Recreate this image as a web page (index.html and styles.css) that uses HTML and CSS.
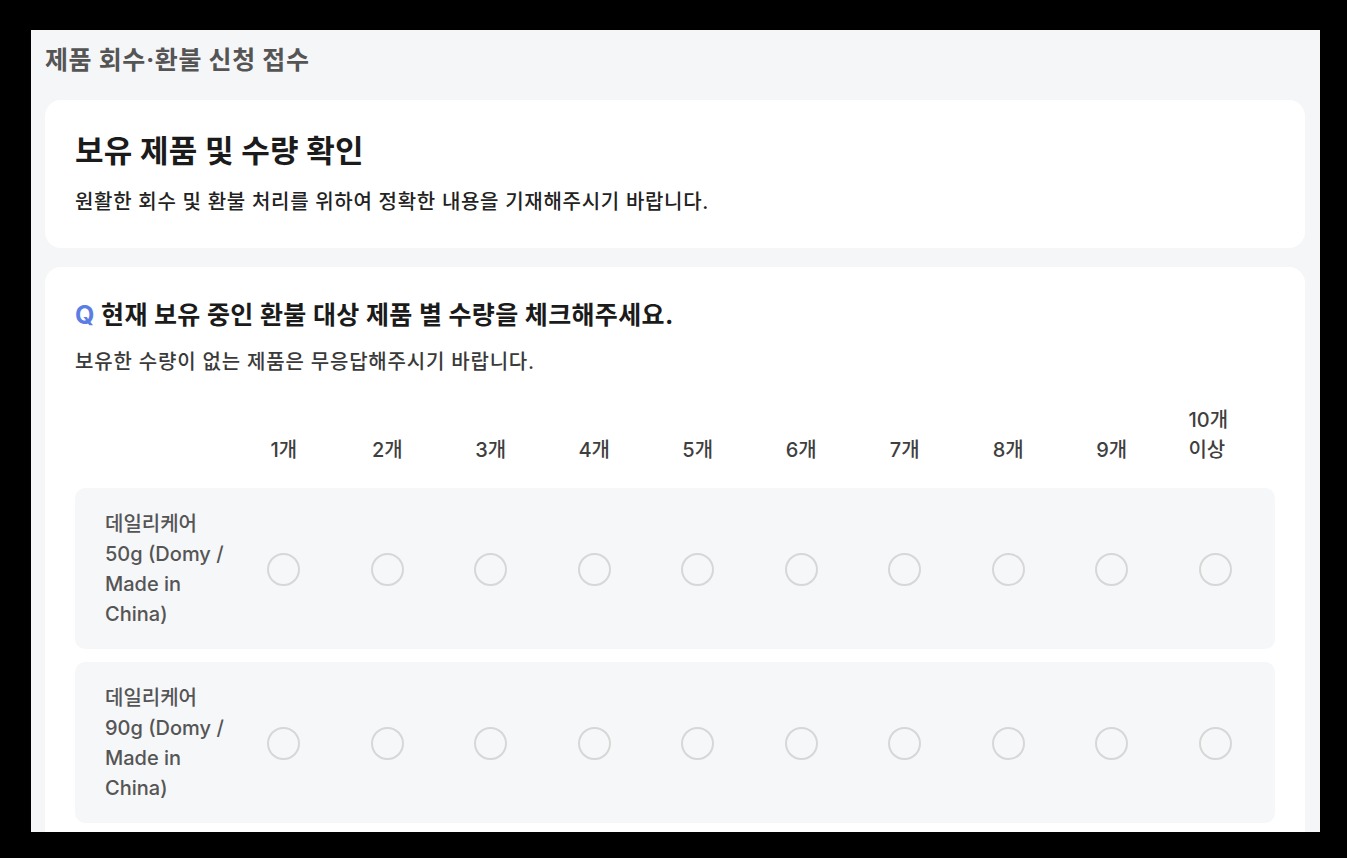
FILE: index.html
```html
<!DOCTYPE html>
<html lang="ko">
<head>
    <meta charset="UTF-8">
    <meta name="viewport" content="width=device-width, initial-scale=1.0">
    <title>제품 회수·환불 신청 접수</title>
    <link rel="stylesheet" href="styles.css">
</head>
<body>

<div class="panel">
    <h1 class="page-title">제품 회수·환불 신청 접수</h1>

    <!-- 안내 카드 -->
    <section class="card intro">
        <h2>보유 제품 및 수량 확인</h2>
        <p>원활한 회수 및 환불 처리를 위하여 정확한 내용을 기재해주시기 바랍니다.</p>
    </section>

    <!-- 질문 카드 -->
    <section class="card question">
        <h3><span class="q">Q</span> 현재 보유 중인 환불 대상 제품 별 수량을 체크해주세요.</h3>
        <p class="hint">보유한 수량이 없는 제품은 무응답해주시기 바랍니다.</p>

        <div class="matrix">
            <div class="matrix-head">
                <div class="label"></div>
                <div class="col">1개</div>
                <div class="col">2개</div>
                <div class="col">3개</div>
                <div class="col">4개</div>
                <div class="col">5개</div>
                <div class="col">6개</div>
                <div class="col">7개</div>
                <div class="col">8개</div>
                <div class="col">9개</div>
                <div class="col"><span class="two-line">10개<br>이상</span></div>
            </div>

            <div class="matrix-row">
                <div class="label">데일리케어 50g (Domy / Made in China)</div>
                <label class="col"><input type="radio" name="p50" value="1"></label>
                <label class="col"><input type="radio" name="p50" value="2"></label>
                <label class="col"><input type="radio" name="p50" value="3"></label>
                <label class="col"><input type="radio" name="p50" value="4"></label>
                <label class="col"><input type="radio" name="p50" value="5"></label>
                <label class="col"><input type="radio" name="p50" value="6"></label>
                <label class="col"><input type="radio" name="p50" value="7"></label>
                <label class="col"><input type="radio" name="p50" value="8"></label>
                <label class="col"><input type="radio" name="p50" value="9"></label>
                <label class="col"><input type="radio" name="p50" value="10"></label>
            </div>

            <div class="matrix-row">
                <div class="label">데일리케어 90g (Domy / Made in China)</div>
                <label class="col"><input type="radio" name="p90" value="1"></label>
                <label class="col"><input type="radio" name="p90" value="2"></label>
                <label class="col"><input type="radio" name="p90" value="3"></label>
                <label class="col"><input type="radio" name="p90" value="4"></label>
                <label class="col"><input type="radio" name="p90" value="5"></label>
                <label class="col"><input type="radio" name="p90" value="6"></label>
                <label class="col"><input type="radio" name="p90" value="7"></label>
                <label class="col"><input type="radio" name="p90" value="8"></label>
                <label class="col"><input type="radio" name="p90" value="9"></label>
                <label class="col"><input type="radio" name="p90" value="10"></label>
            </div>
        </div>
    </section>
</div>

</body>
</html>
```

FILE: styles.css
```css
body {
    margin: 0;
    background-color: #000;
    font-family: Inter, "Noto Sans CJK KR", sans-serif;
}

/* 회색 바탕 패널 */
.panel {
    margin: 30px 27px 0 31px;
    height: 802px;
    overflow: hidden;
    background-color: #f5f6f8;
    padding: 14px 15px 0 14px;
    box-sizing: border-box;
}
.page-title {
    margin: 0 0 24px 0;
    font-size: 25px;
    line-height: 32px;
    font-weight: 700;
    color: #555;
    letter-spacing: 0.6px;
}

/* 카드 */
.card {
    background-color: #fff;
    border-radius: 16px;
    padding: 31px 30px 32px;
    margin-bottom: 19px;
}
.intro h2 {
    margin: 0 0 17px 0;
    font-size: 31px;
    line-height: 40px;
    font-weight: 700;
    color: #1b1b1b;
    letter-spacing: 0.2px;
}
.intro p {
    margin: 0;
    font-size: 20px;
    line-height: 28px;
    font-weight: 500;
    color: #222;
    letter-spacing: 0.7px;
}

.question h3 {
    margin: 0;
    font-size: 25px;
    line-height: 34px;
    font-weight: 700;
    color: #1b1b1b;
    letter-spacing: 0.35px;
}
.question .q {
    color: #5b7ee5;
}
.question .hint {
    margin: 15px 0 28px 0;
    font-size: 20px;
    line-height: 30px;
    font-weight: 500;
    color: #3a3a3a;
    letter-spacing: 0.8px;
}

/* 수량 선택 표 */
.matrix {
    display: flex;
    flex-direction: column;
    gap: 13px;
}
.matrix-head,
.matrix-row {
    display: grid;
    grid-template-columns: 157px repeat(10, 1fr);
    padding-right: 8px;
}
.matrix-head {
    align-items: end;
    margin-bottom: 10px;
    font-size: 20px;
    line-height: 30px;
    font-weight: 500;
    color: #3f3f3f;
}
.matrix-head .col {
    text-align: center;
}
.matrix-head .two-line {
    display: inline-block;
    text-align: left;
    margin-right: 14px;
}
.matrix-row {
    align-items: center;
    background-color: #f6f7f9;
    border-radius: 10px;
    padding-top: 21px;
    padding-bottom: 20px;
}
.matrix-row .label {
    padding-left: 30px;
    font-size: 20px;
    line-height: 30px;
    font-weight: 500;
    color: #555;
}
.matrix-row .col {
    display: flex;
    justify-content: center;
    cursor: pointer;
}

.matrix-row input[type="radio"] {
    appearance: none;
    -webkit-appearance: none;
    margin: 0;
    width: 33px;
    height: 33px;
    border: 2.5px solid #d7d7d7;
    border-radius: 50%;
    background-color: transparent;
    cursor: pointer;
}
.matrix-row input[type="radio"]:checked {
    border: 9px solid #5b7ee5;
}
```
